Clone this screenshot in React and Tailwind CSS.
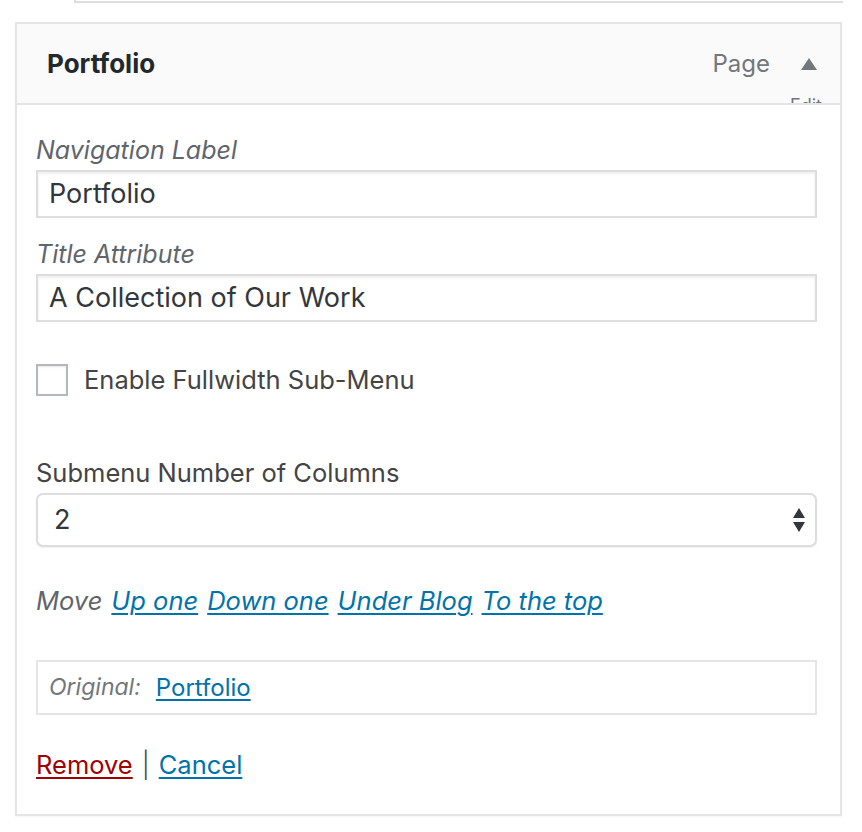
// Menu item settings panel (WP nav menu editor, expanded item)

const font = { fontFamily: "Inter, 'Noto Sans', sans-serif" };

const Label = ({ children }) => (
  <p className="italic text-[25px] leading-[34px] text-[#60656b]">{children}</p>
);

const TextField = ({ value }) => (
  <div className="h-[48px] border-2 border-[#dddddd] bg-white shadow-[inset_0_2px_3px_rgba(0,0,0,0.07)] flex items-center px-[11px]">
    <span className="text-[27px] text-[#32373c]">{value}</span>
  </div>
);

const MoveLink = ({ children }) => (
  <a href="#" className="text-[#0073aa] underline underline-offset-[3px] decoration-2">
    {children}
  </a>
);

const App = () => {
  return (
    <div className="relative w-[862px] h-[832px] bg-white overflow-hidden" style={font}>
      {/* previous item, mostly scrolled off */}
      <div className="ml-[74px] mr-[19px] h-[3px] border-l-2 border-b-2 border-[#dddddd]" />

      <div className="mt-[19px] ml-[15px] w-[827px] border-2 border-[#e5e5e5] shadow-[0_1px_2px_rgba(0,0,0,0.04)]">
        {/* header */}
        <div className="relative h-[79px] bg-[#fafafa] flex items-center justify-between pl-[30px] pr-[22px] overflow-hidden">
          <h3 className="font-bold text-[26px] text-[#23282d]">Portfolio</h3>
          <div className="flex items-center gap-[30px]">
            <span className="text-[24px] text-[#72777c]">Page</span>
            <svg width="18" height="14" viewBox="0 0 18 14">
              <path d="M9 1 L17 13 L1 13 Z" fill="#72777c" />
            </svg>
          </div>
          <span className="absolute right-[18px] top-[72px] text-[18px] leading-[20px] text-[#72777c]">Edit</span>
        </div>

        {/* body */}
        <div className="border-t-2 border-[#e5e5e5] pl-[19px] pr-[23px] pt-[28px] pb-[32px]">
          <Label>Navigation Label</Label>
          <div className="mt-[3px]">
            <TextField value="Portfolio" />
          </div>

          <div className="mt-[19px]">
            <Label>Title Attribute</Label>
          </div>
          <div className="mt-[3px]">
            <TextField value="A Collection of Our Work" />
          </div>

          <div className="mt-[42px] flex items-center gap-[16px] h-[32px]">
            <span className="w-[32px] h-[32px] border-2 border-[#b4b9be] bg-white shadow-[inset_0_1px_2px_rgba(0,0,0,0.1)]" />
            <span className="text-[25.5px] text-[#444444]">Enable Fullwidth Sub-Menu</span>
          </div>

          <p className="mt-[60px] text-[25.5px] leading-[34px] text-[#444444]">Submenu Number of Columns</p>
          <div className="mt-[3px] h-[54px] rounded-[7px] border-2 border-[#dddddd] bg-white shadow-[0_1px_2px_rgba(0,0,0,0.06)] flex items-center justify-between pl-[16px] pr-[9px]">
            <span className="text-[27px] text-[#32373c]">2</span>
            <svg width="14" height="26" viewBox="0 0 14 26">
              <path d="M7 1 L13 11 L1 11 Z" fill="#32373c" />
              <path d="M1 15 L13 15 L7 25 Z" fill="#32373c" />
            </svg>
          </div>

          <p className="mt-[37px] italic text-[25.5px] leading-[34px] text-[#60656b] flex gap-[9px]">
            <span>Move</span>
            <MoveLink>Up one</MoveLink>
            <MoveLink>Down one</MoveLink>
            <MoveLink>Under Blog</MoveLink>
            <MoveLink>To the top</MoveLink>
          </p>

          <div className="mt-[42px] h-[55px] border-2 border-[#e5e5e5] flex items-center pl-[11px] gap-[15px]">
            <span className="italic text-[23px] text-[#72777c]">Original:</span>
            <a href="#" className="text-[24px] text-[#0073aa] underline underline-offset-[3px] decoration-2">
              Portfolio
            </a>
          </div>

          <p className="mt-[33px] text-[25.5px] leading-[34px] text-[#444444]">
            <a href="#" className="text-[#a00000] underline underline-offset-[3px] decoration-2">Remove</a>
            <span className="mx-[9px] font-light">|</span>
            <a href="#" className="text-[#0073aa] underline underline-offset-[3px] decoration-2">Cancel</a>
          </p>
        </div>
      </div>
    </div>
  );
};

export default App;
